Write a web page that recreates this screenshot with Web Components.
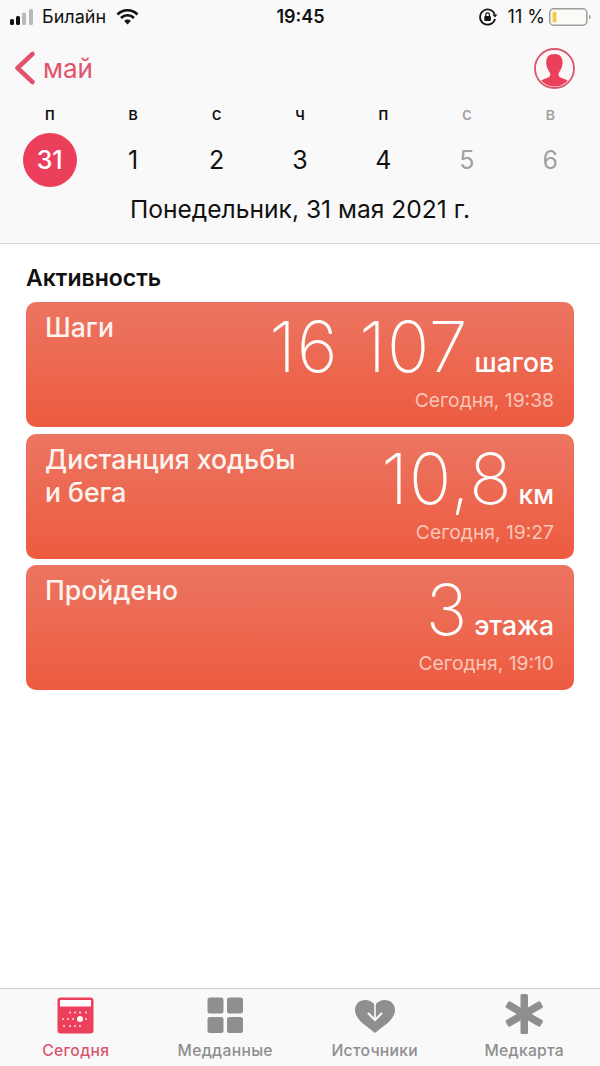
<!DOCTYPE html>
<html lang="ru">
<head>
<meta charset="utf-8">
<title>Здоровье</title>
<style>
  html, body { margin: 0; height: 100%; }
  body { font-family: Inter, "Noto Sans", sans-serif; color: #000; background: #fff; }
</style>
</head>
<body>
<health-app>
  <status-bar slot="top"></status-bar>
  <week-header slot="top"></week-header>
  <section-title slot="title">Активность</section-title>
  <activity-card value="16 107" unit="шагов" time="Сегодня, 19:38">Шаги</activity-card>
  <activity-card value="10,8" unit="км" time="Сегодня, 19:27">Дистанция ходьбы<br>и бега</activity-card>
  <activity-card value="3" unit="этажа" time="Сегодня, 19:10">Пройдено</activity-card>
  <tab-bar slot="tabs"></tab-bar>
</health-app>

<script>
class healthApp extends HTMLElement {
  constructor() {
    super();
    this.attachShadow({ mode: "open" }).innerHTML = `
      <style>
        :host { display: flex; flex-direction: column; width: 600px; height: 1066px; background: #fff; }
        main { flex: 1; display: flex; flex-direction: column; }
        .list { flex: 1; display: flex; flex-direction: column; gap: 6.5px; padding: 0 26px; }
      </style>
      <slot name="top"></slot>
      <main>
        <slot name="title"></slot>
        <div class="list"><slot></slot></div>
      </main>
      <slot name="tabs"></slot>
    `;
  }
}

class statusBar extends HTMLElement {
  constructor() {
    super();
    this.attachShadow({ mode: "open" }).innerHTML = `
      <style>
        :host { display: grid; grid-template-columns: 1fr auto 1fr; align-items: center; height: 33px; padding: 0 9px 0 10px; font-size: 18px; color: #111; background: #f9f9f9; }
        .left, .right { display: flex; align-items: center; }
        .right { justify-content: flex-end; }
        .carrier { margin-left: 5px; }
        .wifi { margin-left: 10px; }
        .time { font-weight: 600; font-size: 18px; }
        .pct { margin: 0 4px 0 10px; }
        svg { display: block; }
      </style>
      <div class="left">
        <svg width="27" height="16" viewBox="0 0 27 16">
          <rect x="0" y="10" width="4" height="6" rx="1.5" fill="#111"/>
          <rect x="6" y="7" width="4" height="9" rx="1.5" fill="#111"/>
          <rect x="12" y="3.5" width="4" height="12.5" rx="1.5" fill="#b9b9b9"/>
          <rect x="19" y="0" width="4" height="16" rx="1.5" fill="#b9b9b9"/>
        </svg>
        <span class="carrier">Билайн</span>
        <svg class="wifi" width="23" height="16" viewBox="0 0 23 16">
          <path d="M1.5 5.5a14 14 0 0 1 20 0" fill="none" stroke="#111" stroke-width="2.6"/>
          <path d="M5 9a9.2 9.2 0 0 1 13 0" fill="none" stroke="#111" stroke-width="2.6"/>
          <path d="M8.2 12a4.6 4.6 0 0 1 6.6 0L11.5 15.5z" fill="#111"/>
        </svg>
      </div>
      <div class="time">19:45</div>
      <div class="right">
        <svg width="19" height="18" viewBox="0 0 19 18">
          <path d="M15.8 6.5A7.6 7.6 0 1 0 16 11" fill="none" stroke="#111" stroke-width="1.7"/>
          <path d="M13.4 6.6h5l-2.5 3z" fill="#111"/>
          <rect x="5.3" y="8" width="6.6" height="5" rx="1" fill="#111"/>
          <path d="M6.8 8V6.6a1.8 1.8 0 0 1 3.6 0V8" fill="none" stroke="#111" stroke-width="1.2"/>
        </svg>
        <span class="pct">11 %</span>
        <svg width="42" height="18" viewBox="0 0 42 18">
          <rect x=".75" y=".75" width="37" height="16.5" rx="4" fill="#fbfbf8" stroke="#9c9c9c" stroke-width="1.5"/>
          <rect x="3.5" y="3.5" width="4" height="11" rx="1.5" fill="#f5cb46"/>
          <path d="M40 7c1.2.3 1.6 1 1.6 2s-.4 1.7-1.6 2z" fill="#9c9c9c"/>
        </svg>
      </div>
    `;
  }
}

class weekHeader extends HTMLElement {
  constructor() {
    super();
    const days = [["п","31"],["в","1"],["с","2"],["ч","3"],["п","4"],["с","5"],["в","6"]];
    const letters = days.map((d, i) => `<span class="${i > 4 ? "off" : ""}">${d[0]}</span>`).join("");
    const nums = days.map((d, i) => `<span class="${i > 4 ? "off" : ""}${i === 0 ? " now" : ""}"><b>${d[1]}</b></span>`).join("");
    this.attachShadow({ mode: "open" }).innerHTML = `
      <style>
        :host { display: block; background: #f9f9f9; border-bottom: 1px solid #d4d4d6; height: 210px; }
        .nav { display: flex; justify-content: space-between; align-items: center; height: 70px; padding: 0 25px 0 14px; }
        .back { display: flex; align-items: center; gap: 7px; color: #e2526c; font-size: 26px; }
        svg { display: block; }
        .row { display: grid; grid-template-columns: repeat(7, 1fr); padding: 0 8px; text-align: center; }
        .letters { font-size: 17px; font-weight: 500; height: 23px; line-height: 23px; margin-bottom: 7px; color: #111; }
        .nums { font-size: 25px; height: 54px; align-items: center; color: #111; }
        .nums span { display: flex; justify-content: center; }
        .nums b { font-weight: 400; }
        .off { color: #a1a1a3 !important; }
        .now b { width: 54px; height: 54px; border-radius: 50%; background: #eb3f5c; color: #fff; display: flex; align-items: center; justify-content: center; font-weight: 500; }
        .date { text-align: center; font-size: 24.6px; margin-top: 7px; line-height: 30px; color: #111; }
      </style>
      <div class="nav">
        <span class="back">
          <svg width="22" height="34" viewBox="0 0 22 34"><path d="M18.5 3L3.5 17l15 14" fill="none" stroke="#e2526c" stroke-width="4.5" stroke-linecap="round" stroke-linejoin="round"/></svg>
          май
        </span>
        <svg width="41" height="41" viewBox="0 0 41 41">
          <defs><clipPath id="c"><circle cx="20.5" cy="20.5" r="18"/></clipPath></defs>
          <circle cx="20.5" cy="20.5" r="19.5" fill="#fbf7f7" stroke="#d9556c" stroke-width="1.8"/>
          <g clip-path="url(#c)" fill="#eb3f5c">
            <path d="M20.5 6c6 0 8.500 4 8 10-.3 4-2.500 7-3.700 9-.5 1-.3 3 1 4 3 1.800 8 2.500 10 5.500V42H5V34.500c2-3 7-3.700 10-5.500 1.300-1 1.500-3 1-4-1.200-2-3.400-5-3.700-9-.5-6 2-10 8.200-10z"/>
          </g>
        </svg>
      </div>
      <div class="row letters">${letters}</div>
      <div class="row nums">${nums}</div>
      <div class="date">Понедельник, 31 мая 2021 г.</div>
    `;
  }
}

class sectionTitle extends HTMLElement {
  constructor() {
    super();
    this.attachShadow({ mode: "open" }).innerHTML = `
      <style>
        :host { display: block; padding: 20px 26px 0; height: 38px; font-size: 23px; font-weight: 600; line-height: 28px; color: #111; }
      </style>
      <slot></slot>
    `;
  }
}

class activityCard extends HTMLElement {
  constructor() {
    super();
    this.attachShadow({ mode: "open" }).innerHTML = `
      <style>
        :host { display: flex; justify-content: space-between; box-sizing: border-box; height: 125px; padding: 9px 20px 0; border-radius: 10px; color: #fff; background: linear-gradient(#ec7561, #ed5b40); }
        .name { font-size: 26.6px; font-weight: 500; line-height: 33px; color: #fdf3ef; margin-left: -1px; }
        .side { display: flex; flex-direction: column; align-items: flex-end; }
        .reading { display: flex; align-items: baseline; gap: 6px; height: 72px; line-height: 72px; white-space: nowrap; }
        .value { font-size: 70px; font-weight: 200; letter-spacing: 1px; }
        .unit { font-size: 26.5px; font-weight: 500; }
        .time { margin-top: 5px; font-size: 19.3px; line-height: 24px; color: #f9c6b8; }
      </style>
      <div class="name"><slot></slot></div>
      <div class="side">
        <div class="reading"><span class="value">${this.getAttribute("value")}</span><span class="unit">${this.getAttribute("unit")}</span></div>
        <div class="time">${this.getAttribute("time")}</div>
      </div>
    `;
  }
}

class tabBar extends HTMLElement {
  constructor() {
    super();
    this.attachShadow({ mode: "open" }).innerHTML = `
      <style>
        :host { display: grid; grid-template-columns: repeat(4, 1fr); height: 77px; background: #f9f9f9; border-top: 1px solid #cfcfd1; padding: 0 1px; }
        .tab { display: flex; flex-direction: column; align-items: center; color: #8e8e90; font-size: 15.7px; font-weight: 500; letter-spacing: .3px; }
        .tab.on { color: #d9566f; }
        .ico { height: 45px; display: flex; align-items: flex-end; }
        .lbl { margin-top: 7px; line-height: 20px; }
        svg { display: block; }
      </style>
      <div class="tab on">
        <div class="ico"><svg width="37" height="37" viewBox="0 0 37 37">
          <rect width="36" height="36" x=".5" y=".5" rx="3" fill="#eb3f5c"/>
          <rect x="3" y="3" width="31" height="6.5" fill="#fff"/>
          <g fill="#fff" opacity=".85">
            <circle cx="13" cy="15.500" r="1"/><circle cx="18" cy="15.500" r="1"/><circle cx="23" cy="15.500" r="1"/><circle cx="29" cy="15.500" r="1"/>
            <circle cx="6" cy="22" r="1"/><circle cx="11" cy="22" r="1"/><circle cx="16" cy="22" r="1"/><circle cx="29" cy="22" r="1"/>
            <circle cx="7" cy="29" r="1"/><circle cx="13" cy="29" r="1"/><circle cx="18" cy="29" r="1"/><circle cx="23" cy="29" r="1"/>
          </g>
          <circle cx="23" cy="22" r="3" fill="#fff"/>
        </svg></div>
        <div class="lbl">Сегодня</div>
      </div>
      <div class="tab">
        <div class="ico"><svg width="37" height="37" viewBox="0 0 37 37" fill="#8f8f91">
          <rect x=".5" y=".5" width="16" height="16" rx="2.5"/><rect x="20" y=".5" width="16" height="16" rx="2.5"/>
          <rect x=".5" y="20" width="16" height="16" rx="2.5"/><rect x="20" y="20" width="16" height="16" rx="2.5"/>
        </svg></div>
        <div class="lbl">Медданные</div>
      </div>
      <div class="tab">
        <div class="ico"><svg width="42" height="42" viewBox="0 0 42 42">
          <path d="M21 41C14 35 1 28 1 18 1 12 5.5 8 11 8c4.500 0 8 2 10 5 2-3 5.500-5 10-5 5.500 0 10 4 10 10 0 10-13 17-20 23z" fill="#8f8f91"/>
          <path d="M21 0v27" stroke="#fafafa" stroke-width="1.8" fill="none" opacity=".9"/>
          <path d="M14 21l7 7 7-7" stroke="#fafafa" stroke-width="2.2" fill="none"/>
        </svg></div>
        <div class="lbl">Источники</div>
      </div>
      <div class="tab">
        <div class="ico"><svg width="38" height="40" viewBox="0 0 38 40" fill="#8f8f91">
          <rect x="15.5" y="0" width="7.5" height="40" rx="1.5"/>
          <rect x="15.5" y="0" width="7.5" height="40" rx="1.5" transform="rotate(60 19.25 20)"/>
          <rect x="15.5" y="0" width="7.5" height="40" rx="1.5" transform="rotate(-60 19.25 20)"/>
        </svg></div>
        <div class="lbl">Медкарта</div>
      </div>
    `;
  }
}

customElements.define("status-bar", statusBar);
customElements.define("week-header", weekHeader);
customElements.define("section-title", sectionTitle);
customElements.define("activity-card", activityCard);
customElements.define("tab-bar", tabBar);
customElements.define("health-app", healthApp);
</script>
</body>
</html>
